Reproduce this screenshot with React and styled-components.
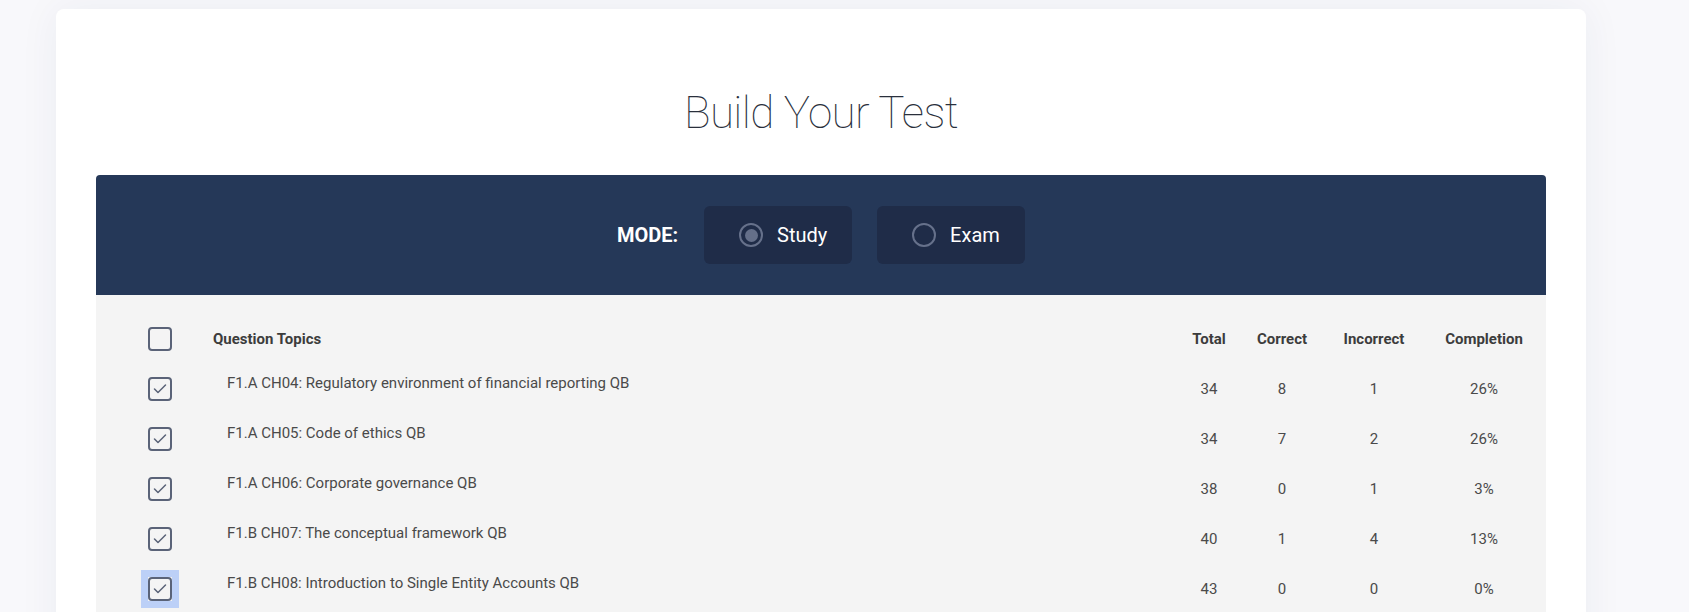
import React from "react";
import styled, { createGlobalStyle } from "styled-components";

const Global = createGlobalStyle`
  html, body {
    margin: 0;
    padding: 0;
    background: #f8f8fb;
    font-family: Roboto, "Liberation Sans", Arial, sans-serif;
  }
  #root {
    padding-top: 9px;
  }
`;

const Card = styled.div`
  margin-left: 56px;
  width: 1530px;
  box-sizing: border-box;
  background: #ffffff;
  border-radius: 8px;
  padding: 82px 40px 0;
  box-shadow: 0 0 40px rgba(40, 50, 100, 0.06);
  min-height: 700px;
`;

const Title = styled.h1`
  margin: 0 0 40px;
  text-align: center;
  font-family: Roboto, sans-serif;
  font-weight: 100;
  font-size: 44px;
  line-height: 44px;
  letter-spacing: -0.6px;
  color: #2a303c;
`;

const ModeBar = styled.div`
  height: 120px;
  background: #253858;
  border-radius: 4px 4px 0 0;
  display: flex;
  align-items: center;
  justify-content: center;
  gap: 25px;
`;

const ModeLabel = styled.span`
  color: #ffffff;
  font-weight: 700;
  font-size: 20px;
  margin-right: 1px;
`;

const ModeButton = styled.button`
  width: 148px;
  height: 58px;
  box-sizing: border-box;
  border: none;
  border-radius: 6px;
  background: #1f2c48;
  display: flex;
  align-items: center;
  gap: 14px;
  padding: 0 0 0 35px;
  color: #ffffff;
  font-family: Roboto, sans-serif;
  font-size: 20px;
  cursor: pointer;
`;

const Radio = styled.span`
  width: 24px;
  height: 24px;
  box-sizing: border-box;
  border-radius: 50%;
  border: 2px solid #66718b;
  display: flex;
  align-items: center;
  justify-content: center;
  &::after {
    content: "";
    width: 13px;
    height: 13px;
    border-radius: 50%;
    background: ${(p) => (p.$checked ? "#646f89" : "transparent")};
  }
`;

const Table = styled.div`
  background: #f4f4f4;
  padding: 19px 16px 40px 52px;
`;

const Row = styled.div`
  display: grid;
  grid-template-columns: 24px 1fr 90px 56px 128px 92px;
  align-items: center;
  height: 50px;
`;

const Box = styled.span`
  position: relative;
  width: 24px;
  height: 24px;
  box-sizing: border-box;
  border: 2px solid #5a6378;
  border-radius: 4px;
  display: flex;
  align-items: center;
  justify-content: center;
  &::before {
    content: "";
    display: ${(p) => (p.$focused ? "block" : "none")};
    position: absolute;
    inset: -9px;
    border: 7px solid #bcd0f7;
    pointer-events: none;
  }
`;

const Topic = styled.div`
  padding-left: ${(p) => (p.$head ? "41px" : "55px")};
  padding-bottom: ${(p) => (p.$head ? "0" : "12px")};
  font-size: 15px;
  font-weight: ${(p) => (p.$head ? 700 : 400)};
  color: ${(p) => (p.$head ? "#3c3c3c" : "#4a4a4a")};
`;

const Cell = styled.div`
  text-align: center;
  font-size: 15px;
  font-weight: ${(p) => (p.$head ? 700 : 400)};
  color: ${(p) => (p.$head ? "#3c3c3c" : "#4a4a4a")};
`;

const Check = () => (
  <svg width="20" height="20" viewBox="0 0 20 20">
    <polyline
      points="4.5,10 8,13.5 15.5,6"
      fill="none"
      stroke="#5a6378"
      strokeWidth="1.5"
      strokeLinecap="round"
      strokeLinejoin="round"
    />
  </svg>
);

const rows = [
  ["F1.A CH04: Regulatory environment of financial reporting QB", 34, 8, 1, "26%"],
  ["F1.A CH05: Code of ethics QB", 34, 7, 2, "26%"],
  ["F1.A CH06: Corporate governance QB", 38, 0, 1, "3%"],
  ["F1.B CH07: The conceptual framework QB", 40, 1, 4, "13%"],
  ["F1.B CH08: Introduction to Single Entity Accounts QB", 43, 0, 0, "0%"],
];

export default function App() {
  return (
    <>
      <Global />
      <Card>
        <Title>Build Your Test</Title>
        <ModeBar>
          <ModeLabel>MODE:</ModeLabel>
          <ModeButton>
            <Radio $checked />
            Study
          </ModeButton>
          <ModeButton>
            <Radio />
            Exam
          </ModeButton>
        </ModeBar>
        <Table>
          <Row>
            <Box />
            <Topic $head>Question Topics</Topic>
            <Cell $head>Total</Cell>
            <Cell $head>Correct</Cell>
            <Cell $head>Incorrect</Cell>
            <Cell $head>Completion</Cell>
          </Row>
          {rows.map((r, i) => (
            <Row key={i}>
              <Box $focused={i === rows.length - 1}>
                <Check />
              </Box>
              <Topic>{r[0]}</Topic>
              <Cell>{r[1]}</Cell>
              <Cell>{r[2]}</Cell>
              <Cell>{r[3]}</Cell>
              <Cell>{r[4]}</Cell>
            </Row>
          ))}
        </Table>
      </Card>
    </>
  );
}
